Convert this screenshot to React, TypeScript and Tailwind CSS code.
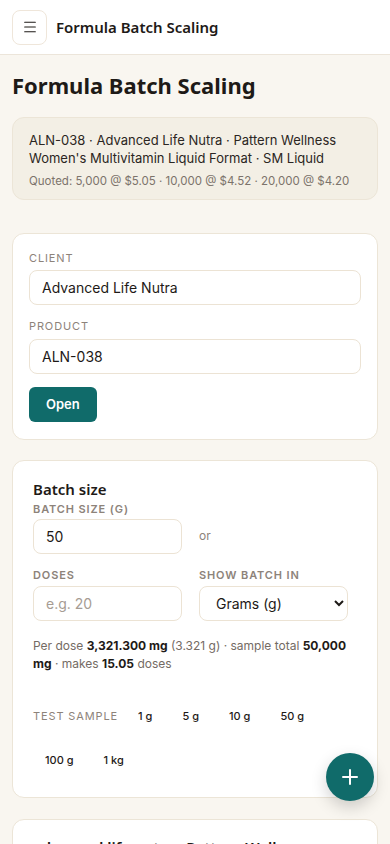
import { Menu, Plus } from "lucide-react"

const heading = { fontFamily: "'Noto Sans', 'DejaVu Sans', sans-serif" }
const body = { fontFamily: "Inter, 'Noto Sans', sans-serif" }

const samples = ["1 g", "5 g", "10 g", "50 g", "100 g", "1 kg"]

function Label({ children, bold }: { children: React.ReactNode; bold?: boolean }) {
  return (
    <div
      className={`text-[11px] leading-[14px] uppercase tracking-[0.08em] text-[#8d837a] ${
        bold ? "font-semibold tracking-[0.1em]" : ""
      }`}
    >
      {children}
    </div>
  )
}

export default function App() {
  return (
    <div className="min-h-[844px] bg-[#f9f6f0] text-[#1e1a17]" style={body}>
      <header className="h-[55px] bg-white border-b border-[#ece5da] flex items-center px-3 gap-[9px]">
        <button className="w-[35px] h-[35px] rounded-lg border border-[#efe6da] bg-white flex items-center justify-center">
          <Menu className="w-[16px] h-[16px] text-[#1e1a17]" strokeWidth={1.6} />
        </button>
        <span className="text-[15px] font-semibold" style={heading}>
          Formula Batch Scaling
        </span>
      </header>

      <main className="px-3">
        <h1 className="mt-[14px] text-[22px] leading-[32px] font-bold" style={heading}>
          Formula Batch Scaling
        </h1>

        <section className="mt-[16px] rounded-xl bg-[#f3efe5] border border-[#ece5d7] px-4 pt-[13px] pb-[10px]">
          <p className="text-[13px] leading-[18px] text-[#2b2622]">
            ALN-038 · Advanced Life Nutra · Pattern Wellness
          </p>
          <p className="text-[13px] leading-[18px] text-[#2b2622]">
            Women's Multivitamin Liquid Format · SM Liquid
          </p>
          <p className="mt-[6px] text-[11.5px] leading-[16px] text-[#7c736b]">
            Quoted: 5,000 @ $5.05 · 10,000 @ $4.52 · 20,000 @ $4.20
          </p>
        </section>

        <section className="mt-[33px] rounded-xl bg-white border border-[#ece5d7] px-4 pt-[17px] pb-[17px]">
          <Label>Client</Label>
          <input
            className="mt-[5px] w-full h-[35px] rounded-lg border border-[#ece3d4] px-3 text-[14px] outline-none"
            defaultValue="Advanced Life Nutra"
          />
          <div className="mt-[14px]">
            <Label>Product</Label>
          </div>
          <input
            className="mt-[6px] w-full h-[35px] rounded-lg border border-[#ece3d4] px-3 text-[14px] outline-none"
            defaultValue="ALN-038"
          />
          <button className="mt-[13px] h-[35px] px-[17px] rounded-md bg-[#106b6a] text-white text-[13px] font-semibold">
            Open
          </button>
        </section>

        <section className="mt-[20px] rounded-xl bg-white border border-[#ece5d7] px-5 pt-[18px] pb-[19px]">
          <h2 className="text-[15px] leading-[20px] font-semibold" style={heading}>
            Batch size
          </h2>
          <div className="mt-[3px] grid grid-cols-[149px_149px] gap-x-[17px] gap-y-[14px]">
            <div>
              <Label bold>Batch size (g)</Label>
              <input
                className="mt-[3px] w-full h-[35px] rounded-lg border border-[#ece3d4] px-3 text-[14px] outline-none"
                defaultValue="50"
              />
            </div>
            <div className="flex items-end h-full pb-[9px]">
              <span className="text-[12px] text-[#8d837a]">or</span>
            </div>
            <div>
              <Label bold>Doses</Label>
              <input
                className="mt-[4px] w-full h-[35px] rounded-lg border border-[#ece3d4] px-3 text-[14px] outline-none placeholder:text-[#a69c93]"
                placeholder="e.g. 20"
              />
            </div>
            <div>
              <Label bold>Show batch in</Label>
              <select
                className="mt-[4px] w-full h-[35px] rounded-lg border border-[#ece3d4] px-[12px] text-[14px] outline-none bg-white"
                defaultValue="g"
              >
                <option value="g">Grams (g)</option>
                <option value="mg">Milligrams (mg)</option>
                <option value="kg">Kilograms (kg)</option>
              </select>
            </div>
          </div>

          <p className="mt-[16px] text-[12px] leading-[18px] text-[#746b64]">
            Per dose <span className="font-bold text-[#1e1a17]">3,321.300 mg</span> (3.321 g) · sample total{" "}
            <span className="font-bold text-[#1e1a17]">50,000</span>{" "}
            <span className="font-bold text-[#1e1a17]">mg</span> · makes{" "}
            <span className="font-bold text-[#1e1a17]">15.05</span> doses
          </p>

          <div className="mt-[25px] flex flex-wrap items-center gap-x-[6px] gap-y-2">
            <div className="mr-[2px]">
              <Label>Test sample</Label>
            </div>
            {samples.map((s) => (
              <button key={s} className="h-9 px-3 rounded-md text-[11px] font-medium text-[#1e1a17]">
                {s}
              </button>
            ))}
          </div>
        </section>

        <section className="mt-[21px] rounded-xl bg-white border border-[#ece5d7] px-5 pt-[17px] pb-5">
          <h2 className="text-[15px] leading-[20px] font-semibold" style={heading}>
            advanced life nutra · Pattern Wellness
          </h2>
          <div className="h-24" />
        </section>
      </main>

      <button className="fixed right-4 bottom-[43px] w-12 h-12 rounded-full bg-[#106b6a] text-white flex items-center justify-center shadow-[0_6px_16px_rgba(0,0,0,0.18)]">
        <Plus className="w-6 h-6" strokeWidth={2} />
      </button>
    </div>
  )
}
